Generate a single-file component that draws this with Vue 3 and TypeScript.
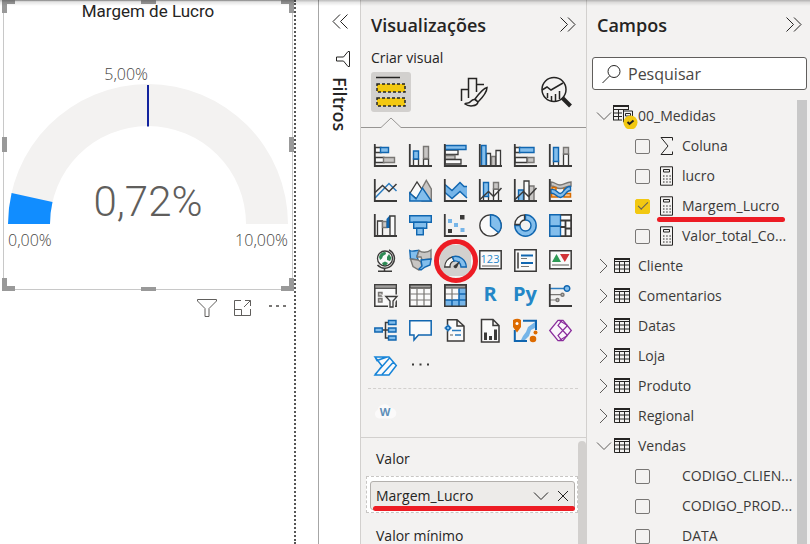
<script setup lang="ts">
import { ref } from 'vue'

interface Part { c: string; d: string }
interface Visual { name: string; parts: Part[]; text?: string; kind?: string }
interface Field { name: string; icon: 'sum' | 'calc' | 'none'; checked: boolean; marked?: boolean }
interface Table { name: string; open: boolean; measure?: boolean; fields: Field[] }

const box = (x: number, y: number, w: number, h: number): string => `M${x} ${y}h${w}v${h}h${-w}z`
const disc = (x: number, y: number, r: number): string =>
  `M${x - r} ${y}a${r} ${r} 0 1 0 ${2 * r} 0a${r} ${r} 0 1 0 ${-2 * r} 0z`
const p = (c: string, d: string): Part => ({ c, d })
const axis = p('axis', 'M.8 0V22H23')

const visuals: Visual[] = [
  { name: 'Barras empilhadas', parts: [p('white', box(1, 3.5, 6, 5)), p('blue', box(6.5, 3.5, 8, 5)), p('white', box(1, 13.5, 9, 5)), p('gray', box(9.5, 13.5, 11, 5)), axis] },
  { name: 'Colunas empilhadas', parts: [p('white', box(4.5, 15, 5, 7)), p('blue', box(4.5, 7, 5, 8)), p('white', box(14.5, 15, 5, 7)), p('gray', box(14.5, 2.5, 5, 12)), axis] },
  { name: 'Barras clusterizadas', parts: [p('white', box(1, 6, 13, 4.5)), p('gray', box(1, 11.5, 10, 4)), p('white', box(1, 15.5, 16, 4.5)), p('blue', box(1, 1.5, 21, 4)), axis] },
  { name: 'Colunas clusterizadas', parts: [p('white', box(7.5, 9.5, 4, 12.5)), p('gray', box(12.5, 12.5, 4, 9.5)), p('white', box(17, 6.5, 4.5, 15.5)), p('blue', box(2.5, 1.5, 4.5, 20.5)), axis] },
  { name: 'Barras 100% empilhadas', parts: [p('white', box(1, 3.5, 5, 5)), p('blue', box(5.5, 3.5, 14.5, 5)), p('white', box(1, 13.5, 12, 5)), p('gray', box(13.5, 13.5, 6.5, 5)), axis] },
  { name: 'Colunas 100% empilhadas', parts: [p('white', box(4.5, 17, 5, 5)), p('blue', box(4.5, 3.5, 5, 14)), p('white', box(14.5, 10, 5, 12)), p('gray', box(14.5, 3.5, 5, 6.5)), axis] },

  { name: 'Linhas', parts: [p('blueline', 'M1 19L15 4.5 22.5 12'), p('line', 'M1 13.5L8.5 6.5 15 12.5 22.5 5'), axis] },
  { name: 'Área', parts: [p('gray', 'M12 11L17.3 1.5 22.3 10V22H13z'), p('white', 'M.8 14.5L8 3 14 12 8 20z'), p('blue', 'M.8 22V14L7 20 13.5 9 22.3 22z')] },
  { name: 'Área empilhada', parts: [p('dot', 'M1 5.5L8 11.5 16 3.5 20 7.5H23V19L16 12.5 8 19.5 1 13.5z'), p('deepline', 'M1 5.5L8 11.5 16 3.5 20 7.5H23M1 13.5L8 19.5 16 12.5 23 19'), axis] },
  { name: 'Linhas e colunas empilhadas', parts: [p('white', box(4.5, 17, 5, 5)), p('blue', box(4.5, 3.5, 5, 14)), p('white', box(14.5, 10, 5, 12)), p('gray', box(14.5, 3.5, 5, 6.5)), p('line', 'M1 20.5L9.5 12.5 14.5 17.5 22.5 9'), axis] },
  { name: 'Linhas e colunas clusterizadas', parts: [p('blue', box(4.5, 11, 5, 11)), p('gray', box(15, 7, 5, 15)), p('white', box(10, 2, 5, 20)), p('line', 'M1 20.5L9.5 12.5 14.5 17.5 22.5 9'), axis] },
  { name: 'Faixas', parts: [p('gray', 'M2 3C6 3 7 6 11 6S17 3 22 3V7C18 7 15 9.500 11 9.500S6 7 2 7z'), p('orange', box(2.5, 14.500, 6, 3.500)), p('orange', box(15, 14.500, 6.500, 3.500)), p('orange', 'M3 8.500H7V11H3zM15 9.500H21V11.500H15z'), p('blue', 'M2 10.500C8 9.500 8 14.500 11.500 14.500S15 7 21.500 7.500V11.500C17 11 16 18.500 11.500 18.500S7 14 2 14z'), axis] },

  { name: 'Cascata', parts: [p('white', box(3.5, 7, 5, 15)), p('gray', box(8.5, 7.5, 4.5, 6)), p('bluefill', 'M12.500 5L16 1V14H12.500z'), p('white', box(16, 2, 5, 20)), axis] },
  { name: 'Funil', parts: [p('blue', box(.7, 1.7, 21.6, 6.5)), p('blue', box(4.7, 8.2, 13, 6)), p('blue', box(7.7, 14.2, 6.6, 6.5))] },
  { name: 'Dispersão', parts: [p('darkfill', box(16, 1, 4.5, 4.5)), p('dot', box(4, 5, 4, 4)), p('dot', box(10, 9, 4, 4)), p('darkfill', box(4, 15, 4, 4)), p('dot', box(16.5, 14, 4, 4)), axis] },
  { name: 'Pizza', parts: [p('white', disc(11.5, 11.5, 10.7)), p('blue', 'M11.500 .8A10.700 10.700 0 0 1 19.500 18.500L11.500 12z')] },
  { name: 'Rosca', parts: [p('blue', 'M11.500 .8A10.700 10.700 0 1 1 .8 11.500H6A5.500 5.500 0 1 0 11.500 6z'), p('white', 'M.8 10.500A10 10 0 0 1 10.500 .8V6A5.500 5.500 0 0 0 6 10.500z')] },
  { name: 'Treemap', parts: [p('white', box(.8, .8, 21.4, 21.4)), p('blue', box(.8, .8, 10.7, 11.5)), p('blue', box(.8, 12.3, 10.7, 9.9)), p('axis', 'M11.500 6.500H22M16.500 6.500V22M16.500 14.500H22M11.500 13H16.500'), p('outline', 'M11.500 .8H22.200V22.200H11.500')] },

  { name: 'Mapa', parts: [p('white', disc(11, 9.5, 7.5)), p('green', 'M5 8C6 4 9 2.500 11.500 3L12 5 9 7 8 9.500 6 11zM13 8L15 5 17.500 9 16 12 13 11zM8 14L11 12.500 14 14 12 16.500 9 16z'), p('line', 'M15 .8A9.700 9.700 0 1 1 3.500 16M10.500 19V22M4 22.300H18')] },
  { name: 'Mapa coroplético', parts: [p('blue', 'M.800 1.500C4 3.500 8 .500 10 1.500L8 7 9 11 1.500 10z'), p('gray', 'M10 1.500C13 4 18 4 22 1V10L13 11 12 8 8 8z'), p('gray', 'M1.500 10L9 11 12 13 13 18 10 21 4 17.500z'), p('blue', 'M12 11L22 10 21 16 16 18 12 21 10 20 13 17z')] },
  { name: 'Medidor', kind: 'selected', parts: [p('white', 'M.7 18A10.800 10.800 0 0 1 8.500 7.800L10 12A6 6 0 0 0 6 18z'), p('blue', 'M8.500 7.800A10.800 10.800 0 0 1 22.300 18H17A6 6 0 0 0 10 12z'), p('darkfill', 'M9.500 17L16 12 13 18.500A2 2 0 0 1 9.500 17z')] },
  { name: 'Cartão', text: '123', parts: [p('card', box(.8, 1.800, 21.400, 18)), p('thin', 'M3 17H20')] },
  { name: 'Cartão de várias linhas', parts: [p('card', box(.8, .8, 21.400, 21.400)), p('line', 'M4 3.500V19.500'), p('bluebar', 'M7 6.500H19M7 14H19'), p('thin', 'M7 9.500H13M7 17.500H15')] },
  { name: 'KPI', parts: [p('card', box(.8, 1.800, 21.400, 18)), p('greenfill', 'M3 13L7.500 5 12 13z'), p('redfill', 'M11 5H20.500L15.800 13z'), p('thin', 'M3 16H20')] },

  { name: 'Segmentação', parts: [p('card', box(.8, .8, 21.400, 21.400)), p('grayfill', box(.8, .8, 21.400, 3.500)), p('gray', box(4.500, 8.500, 3.500, 3.500)), p('gray', box(4.500, 14.500, 3.500, 3.500)), p('halo', 'M11.500 12.500H23.500L19 17V23H16V17z'), p('white', 'M11.800 12.500H23L19 17V23H16V17z')] },
  { name: 'Tabela', parts: [p('card', box(.8, .8, 21.400, 21.400)), p('grayfill', box(1, 1, 21, 3)), p('thin', 'M1 4.500H22M1 10H22M1 16H22M8 4.500V22M15 4.500V22')] },
  { name: 'Matriz', parts: [p('card', box(.8, .8, 21.400, 21.400)), p('dot', 'M15 4H22V22H1V16H15z'), p('deepline', 'M1 16H22M15 4.500V22M8 16V22M15 10H22'), p('grayfill', box(1, 1, 21, 3)), p('thin', 'M1 10H15M8 4.500V16'), p('outline', box(.8, .8, 21.400, 21.400))] },
  { name: 'Visual R', text: 'R', parts: [] },
  { name: 'Visual Python', text: 'Py', parts: [] },
  { name: 'Influenciadores', parts: [p('blueline', 'M1 4.500H16'), p('thin', 'M1 10.700H12M1 16H8'), p('blue', disc(18, 4.500, 2.800)), p('gray', disc(13.500, 10.700, 1.500)), p('gray', disc(8.500, 16, 1.500)), axis] },

  { name: 'Árvore hierárquica', parts: [p('line', 'M8 11H15M15 3.500H11.500V19H15'), p('blue', box(.8, 9, 7.500, 4)), p('blue', box(14.500, 1.500, 7.500, 4)), p('blue', box(14.500, 9, 7.500, 4)), p('blue', box(14.500, 17, 7.500, 4))] },
  { name: 'P e R', parts: [p('bubble', 'M.8 1.800H22.200V16H9.500L5 21V16H.8z')] },
  { name: 'Narrativa', parts: [p('sheet', 'M3.500 6V.8H13L20 7V22H3.500V12M13 .8V7H20'), p('blueline', 'M8 11.500H17M11 16H17'), p('thin', 'M6 16H9'), p('blueline', 'M4 5.500V12.500M.500 9H7.500'), p('blue', disc(4, 9, 2))] },
  { name: 'Relatório paginado', parts: [p('sheet', 'M2.500 .5H14L20 6.500V23H2.500zM14 .5V6.500H20'), p('darkfill', 'M5 13.500H8V21H5zM10 17H13V21H10zM15 10.500H18V21H15z')] },
  { name: 'ArcGIS', parts: [p('mapblue', 'M9 1.800H22V11M13 22H.8V11'), p('dot', 'M21 3V9L17 11 15 17 11 21H7L9 17 12 13 14 8z'), p('orangefill', 'M-1 1Q3.500-1.500 7 1V8L3 13.500-1 8z'), p('whitefill', disc(3, 4.500, 1.500)), p('orangefill', disc(19, 20, 3.300)), p('orangefill', disc(21.500, 13.500, 2))] },
  { name: 'Power Apps', parts: [p('purple', 'M9 1.300H14L22.300 11.500 14 21.700H9L.700 11.500z'), p('purpleline', 'M13 1.300L9 6.500 18.500 16.500M13 21.700L9 16.500 18.500 6.500M10 1.300L18.500 6.500M10 21.700L18.500 16.500')] },
  { name: 'Power Automate', parts: [p('auto', 'M1 3H15L22.300 11.500 15 21H1L8 12zM1 3L3 6.500 13 3M16 3.500L1 20.500M19.500 8L8 20.500')] },
  { name: 'Mais visuais', kind: 'more', parts: [p('darkfill', 'M3 9.500h2v2h-2zM10.500 9.500h2v2h-2zM18 9.500h2v2h-2z')] },
]

const tables = ref<Table[]>([
  {
    name: '00_Medidas', open: true, measure: true,
    fields: [
      { name: 'Coluna', icon: 'sum', checked: false },
      { name: 'lucro', icon: 'calc', checked: false },
      { name: 'Margem_Lucro', icon: 'calc', checked: true, marked: true },
      { name: 'Valor_total_Co...', icon: 'calc', checked: false },
    ],
  },
  { name: 'Cliente', open: false, fields: [] },
  { name: 'Comentarios', open: false, fields: [] },
  { name: 'Datas', open: false, fields: [] },
  { name: 'Loja', open: false, fields: [] },
  { name: 'Produto', open: false, fields: [] },
  { name: 'Regional', open: false, fields: [] },
  {
    name: 'Vendas', open: true,
    fields: [
      { name: 'CODIGO_CLIEN...', icon: 'none', checked: false },
      { name: 'CODIGO_PROD...', icon: 'none', checked: false },
      { name: 'DATA', icon: 'none', checked: false },
    ],
  },
])

const handles = ['nw', 'n', 'ne', 'w', 'e', 'sw', 's', 'se']
const search = ref('')
</script>

<template>
  <div class="app">
    <main class="canvas">
      <div class="report">
        <section class="visual">
          <h2>Margem de Lucro</h2>
          <svg class="gauge" viewBox="0 0 288 265" role="img" aria-label="Margem de Lucro">
            <path d="M4 200A140 140 0 0 1 284 200H242A98 98 0 0 0 46 200z" fill="#f3f2f1" />
            <path d="M4 200A140 140 0 0 1 7.600 169L48.500 178A98 98 0 0 0 46 200z" fill="#118dff" />
            <path class="target" d="M144 61V102.500" />
            <text x="144" y="56" text-anchor="end" class="tick">5,00%</text>
            <text x="4" y="222" class="tick">0,00%</text>
            <text x="284" y="222" text-anchor="end" class="tick">10,00%</text>
            <text x="144" y="192" text-anchor="middle" class="value">0,72%</text>
          </svg>
          <span v-for="h in handles" :key="h" class="handle" :class="h"></span>
        </section>
        <div class="actions">
          <button aria-label="Filtros do visual">
            <svg width="22" height="20" viewBox="0 0 22 20"><path d="M1.500 1.500H20.500V3L13 10.500V18.500H9V10.500L1.500 3z" /></svg>
          </button>
          <button aria-label="Modo de foco">
            <svg width="22" height="20" viewBox="0 0 22 20"><path d="M9 2.500H2.500V17.500H18.500V11M2.500 11.500H9.500V17.500M12 9L18.500 2.500M13 2.500H18.500V8" /></svg>
          </button>
          <button aria-label="Mais opções">
            <svg width="22" height="20" viewBox="0 0 22 20"><path class="dots" d="M1 7h3v2h-3zM8 7h3v2h-3zM15 7h3v2h-3z" /></svg>
          </button>
        </div>
      </div>
    </main>

    <aside class="filters">
      <button aria-label="Expandir filtros">
        <svg width="18" height="18" viewBox="0 0 18 18"><path d="M9 1.500L2 8.500 9 15.500M16.500 1.500L9.500 8.500 16.500 15.500" /></svg>
      </button>
      <svg class="funnel" width="18" height="18" viewBox="0 0 18 18"><path d="M15.500 1.500V16.500H14L9.500 11H2.500V7H9.500L14 1.500z" /></svg>
      <h2>Filtros</h2>
    </aside>

    <section class="builder">
      <header>
        <h1>Visualizações</h1>
        <button aria-label="Recolher visualizações">
          <svg width="18" height="18" viewBox="0 0 18 18"><path d="M1.500 1.500L8.500 8.500 1.500 15.500M9 1.500L16 8.500 9 15.500" /></svg>
        </button>
      </header>
      <p class="subtitle">Criar visual</p>
      <nav class="tabs">
        <button class="active" aria-label="Criar visual">
          <svg width="40" height="40" viewBox="0 0 40 40">
            <path d="M5 5.500H29" class="ink" />
            <path d="M6 12H34V20H6zM6 26H34V34H6z" fill="#f2c811" stroke="#252423" stroke-width="1.500" stroke-dasharray="3 2" />
          </svg>
        </button>
        <button aria-label="Formatar visual">
          <svg width="40" height="40" viewBox="0 0 40 40">
            <path class="ink" d="M7.500 29V17.500H14.500V25M14.500 19V6.500H22.500V20M22.500 12.500H30M14.500 17V26" />
            <path class="ink" d="M33 15.500C30 16 24 23 21 27L24 30C28 26 33 20 33 15.500zM20.500 27.500C17 27 17 31 14 31 11 31 11 32 11 32 15 35 23 34.500 24 30z" />
          </svg>
        </button>
        <button aria-label="Análise">
          <svg width="40" height="40" viewBox="0 0 40 40">
            <circle class="ink" cx="18" cy="17.500" r="12" />
            <path class="ink" d="M6 18L11 15 15 18 27 11M11.500 21V26M15.500 24V29M19.500 22V29M23.500 19V27" />
            <path d="M26.500 26L34.500 34" stroke="#252423" stroke-width="4" />
          </svg>
        </button>
      </nav>
      <svg class="caret" height="12" viewBox="0 0 226 12" preserveAspectRatio="xMinYMin slice"><path d="M0 10.500H20L30 1 40 10.500H1000" /></svg>

      <div class="gallery">
        <button v-for="v in visuals" :key="v.name" :aria-label="v.name" :class="v.kind">
          <svg width="23" height="23" viewBox="0 0 23 23">
            <path v-for="(part, i) in v.parts" :key="i" :class="part.c" :d="part.d" />
            <text v-if="v.text" x="11" :class="v.text === '123' ? 'digits' : 'code'" :y="v.text === '123' ? 14 : 17">{{ v.text }}</text>
          </svg>
          <span v-if="v.kind === 'selected'" class="ring"></span>
        </button>
      </div>
      <div class="custom">
        <button aria-label="Nuvem de palavras">
          <svg width="24" height="18" viewBox="0 0 24 18">
            <path class="cloud" d="M6 16.500A4.500 4.500 0 0 1 4.500 8 7 7 0 0 1 17.500 6 5 5 0 0 1 18.500 16.500z" />
            <text x="12" y="14" class="word">W</text>
          </svg>
        </button>
      </div>

      <div class="wells">
        <div class="well-list">
          <h3>Valor</h3>
          <div class="drop">
            <div class="pill">
              <span>Margem_Lucro</span>
              <button aria-label="Opções do campo"><svg width="16" height="12" viewBox="0 0 16 12"><path d="M1 2.500L8 9.500 15 2.500" /></svg></button>
              <button aria-label="Remover campo"><svg width="12" height="12" viewBox="0 0 12 12"><path d="M1 1L11 11M11 1L1 11" /></svg></button>
            </div>
          </div>
          <h3>Valor mínimo</h3>
        </div>
        <div class="bar"></div>
      </div>
    </section>

    <section class="fields">
      <header>
        <h1>Campos</h1>
        <button aria-label="Recolher campos">
          <svg width="18" height="18" viewBox="0 0 18 18"><path d="M1.500 1.500L8.500 8.500 1.500 15.500M9 1.500L16 8.500 9 15.500" /></svg>
        </button>
      </header>
      <label class="search">
        <svg width="20" height="20" viewBox="0 0 20 20"><circle cx="12" cy="7.500" r="6" /><path d="M7.500 12L.500 19" /></svg>
        <input v-model="search" type="text" placeholder="Pesquisar" aria-label="Pesquisar" />
      </label>
      <div class="tree-area">
        <ul class="tree">
          <li v-for="t in tables" :key="t.name">
            <button class="row table-row" :aria-expanded="t.open" @click="t.open = !t.open">
              <svg class="twisty" width="16" height="16" viewBox="0 0 16 16"><path :d="t.open ? 'M1 4.500L8 11.500 15 4.500' : 'M4 1L11 8 4 15'" /></svg>
              <svg v-if="t.measure" class="grid-icon" width="26" height="26" viewBox="0 0 26 26">
                <path d="M0 3H15.500" stroke-width="2" />
                <path d="M0 6.500H16M0 10H9M0 13.500H9M0 17H9M.500 2V17M5.500 6V17M10.500 6V8M15.500 2V7" />
                <path d="M10.500 8H19.500V19H10.500zM12.500 10.500H17.500V13H12.500z" />
                <circle cx="17.500" cy="19.500" r="7" fill="#f2c811" stroke="none" />
                <path d="M14.500 19L16.500 21 20.500 17.500" stroke-width="2" />
              </svg>
              <svg v-else class="grid-icon" width="26" height="26" viewBox="0 0 26 26">
                <path d="M1.500 5.500H16.500V19.500H1.500zM1 8.500H17M1 12H17M1 16H17M6.500 8V19M11.500 8V19" /><path d="M1 6H17" stroke-width="2" />
              </svg>
              <span>{{ t.name }}</span>
            </button>
            <template v-if="t.open">
              <label v-for="f in t.fields" :key="f.name" class="row field-row">
                <input v-model="f.checked" type="checkbox" />
                <svg class="kind" width="16" height="20" viewBox="0 0 16 20">
                  <path v-if="f.icon === 'sum'" d="M13.500 4.500V1.500H2L9 10 2 18.500H13.500V15.500" />
                  <template v-else-if="f.icon === 'calc'">
                    <path d="M1.500 .8H13.500V19.200H1.500zM4.500 3.500H10.500V6H4.500z" />
                    <path d="M4 10H12M4 13H12M4 16H12" stroke-dasharray="1.500 1.700" />
                  </template>
                </svg>
                <span>{{ f.name }}</span>
                <i v-if="f.marked" class="underline"></i>
              </label>
            </template>
          </li>
        </ul>
        <div class="bar"></div>
      </div>
    </section>
    <div class="shade"></div>
  </div>
</template>

<style>
body { margin: 0; background: #fff; }
</style>

<style scoped>
.app {
  position: relative;
  display: flex;
  height: 100vh;
  overflow: hidden;
  color: #252423;
  font-family: "Open Sans", "Noto Sans", sans-serif;
  font-size: 14px;
  line-height: 20px;
}
* { box-sizing: border-box; }
button { border: 0; padding: 0; margin: 0; background: none; color: inherit; font: inherit; display: flex; align-items: center; justify-content: center; }
h1, h2, h3, p, ul { margin: 0; padding: 0; font-size: 14px; font-weight: 400; }
svg { display: block; fill: none; stroke: #252423; flex: none; }
svg text { stroke: none; }
.shade { position: absolute; top: 0; left: 0; right: 0; height: 6px; background: linear-gradient(#00000045, #00000018 40%, #0000); pointer-events: none; }

.canvas { flex: 1; padding-right: 22px; min-width: 0; border-right: 1px solid #a6a6a6; background: #fff; }
.report { height: 100%; border-right: 2px dotted #555; }
.visual { position: relative; margin: 0 1px 0 3px; border: 1px solid #c8c8c8; }
.visual h2 { height: 23px; font: 17px/21px Roboto, sans-serif; text-align: center; }
.gauge { width: 100%; stroke: none; }
.target { stroke: #12239e; stroke-width: 2; }
.tick { font-size: 16px; font-weight: 300; fill: #484644; }
.value { font: 300 42px Roboto, sans-serif; fill: #605e5c; }
.handle { position: absolute; border: 0 solid #999; width: 13px; height: 13px; }
.nw { left: -2px; top: -1px; border-width: 4px 0 0 5px; }
.ne { right: -2px; top: -1px; border-width: 4px 5px 0 0; }
.sw { left: -2px; bottom: -2px; border-width: 0 0 5px 5px; }
.se { right: -2px; bottom: -2px; border-width: 0 5px 5px 0; }
.n, .s { left: calc(50% - 7px); width: 15px; height: 4px; background: #999; }
.n { top: -1px; }
.s { bottom: -2px; }
.w, .e { top: calc(50% - 8px); width: 5px; height: 15px; background: #999; }
.w { left: -2px; }
.e { right: -2px; }
.actions { display: flex; justify-content: flex-end; gap: 14px; padding: 8px 4px; }
.actions svg { stroke: #605e5c; }
.actions .dots { fill: #797775; stroke: none; }

.filters { flex: none; width: 41px; display: flex; flex-direction: column; align-items: center; padding-top: 13px; background: #fff; }
.filters .funnel { margin: 19px 0 0 6px; }
.filters h2 { margin-top: 9px; writing-mode: vertical-rl; font-size: 18px; font-weight: 600; line-height: 24px; }

.builder { flex: none; width: 226px; display: flex; flex-direction: column; border-left: 1px solid #d2d0ce; background: #f3f2f1; }
header { display: flex; justify-content: space-between; align-items: center; padding: 11px 7px 7px 10px; }
.builder header { padding-right: 9px; }
h1 { font-size: 18px; font-weight: 600; line-height: 28px; }
.subtitle { padding: 2px 10px 4px; }
.tabs { display: flex; justify-content: space-between; padding: 0 10px; }
.tabs .active { background: #d2d0ce; border-radius: 3px; }
.ink { stroke: #252423; stroke-width: 1.500; }
.caret { width: 100%; margin-top: 5px; }
.caret path { stroke: #979593; }
.gallery { display: grid; grid-template-columns: repeat(6, 35px); padding: 9px 7px 5px; }
.gallery button { position: relative; height: 35px; }
.gallery svg { overflow: visible; }
.gallery .selected svg { outline: 4px solid #d2d0ce; background: #d2d0ce; }
.ring { position: absolute; width: 44px; height: 44px; left: -4px; top: -4px; border: 5px solid #ed1c24; border-radius: 50%; }
.axis { stroke: #3b3a39; stroke-width: 1.800; }
.white { fill: #fafafa; stroke: #3b3a39; stroke-width: 1.300; }
.blue { fill: #83beec; stroke: #1066b0; stroke-width: 1.400; }
.gray { fill: #c8c6c4; stroke: #797774; stroke-width: 1.400; }
.line { stroke: #3b3a39; stroke-width: 1.500; }
.blueline { stroke: #2b7cc0; stroke-width: 1.500; }
.deepline { stroke: #1066b0; stroke-width: 1.500; }
.bluebar { stroke: #1066b0; stroke-width: 2; }
.bluefill { fill: #1066b0; stroke: none; }
.orange { fill: #f7c08a; stroke: #d86c00; stroke-width: 1.500; }
.orangefill { fill: #dd6b00; stroke: none; }
.darkfill { fill: #3b3a39; stroke: none; }
.whitefill { fill: #fff; stroke: none; }
.grayfill { fill: #a19f9d; stroke: #3b3a39; }
.dot { fill: #76b5e8; stroke: none; }
.outline { stroke: #3b3a39; stroke-width: 1.500; }
.card { fill: #fafafa; stroke: #3b3a39; stroke-width: 1.500; }
.sheet { fill: #fafafa; stroke: #3b3a39; stroke-width: 1.500; }
.thin { stroke: #797774; stroke-width: 1.200; }
.green { fill: #2e8a55; stroke: none; }
.greenfill { fill: #2e9a55; stroke: none; }
.redfill { fill: #d13438; stroke: none; }
.halo { fill: #f3f2f1; stroke: #f3f2f1; stroke-width: 4; }
.bubble { fill: #fafafa; stroke: #1066b0; stroke-width: 1.500; }
.mapblue { stroke: #1066b0; stroke-width: 2; }
.purple { stroke: #8a2d9c; fill: #faf5fb; stroke-width: 1.300; }
.purpleline { stroke: #8a2d9c; stroke-width: 1.200; }
.auto { stroke: #1684d8; fill: #fafafa; stroke-width: 1.500; }
.digits { fill: #2b88c9; font-size: 11px; text-anchor: middle; }
.code { fill: #2487c7; font-size: 20px; font-weight: 700; text-anchor: middle; }
.custom { flex: none; height: 49px; margin: 0 8px 0 7px; padding-top: 13px; border-top: 1px dashed #d2d0ce; }
.custom button { width: 34px; }
.cloud { fill: #fbfafa; stroke: none; }
.word { fill: #5f8fb8; font-size: 11px; font-weight: 700; text-anchor: middle; }

.wells { flex: 1; min-height: 0; display: flex; border-top: 1px solid #d2d0ce; }
.well-list { flex: 1; padding-left: 5px; overflow: hidden; }
.well-list h3 { padding: 13px 10px 9px; line-height: 16px; }
.drop { margin-bottom: 2px; padding: 4px 2px 2px 3px; border: 1px dashed #c8c6c4; background: #fff; }
.pill { position: relative; display: flex; align-items: center; gap: 8px; height: 29px; padding: 0 5px; border: 1px solid #b3b0ad; border-radius: 3px; background: #edebe9; }
.pill span { flex: 1; }
.pill::after { content: ""; position: absolute; left: 2px; right: -1px; bottom: -2px; height: 5px; border-radius: 3px; background: #ed1c24; }
.wells .bar { width: 8px; margin-top: 3px; border-radius: 4px 4px 0 0; background: #d2d0ce; }

.fields { flex: none; width: 224px; display: flex; flex-direction: column; border-left: 1px solid #d2d0ce; background: #f3f2f1; }
.search { display: flex; align-items: center; gap: 6px; height: 33px; margin: 11px 3px 0 5px; padding: 0 9px; border: 1px solid #605e5c; border-radius: 3px; background: #fff; }
.search input { flex: 1; min-width: 0; padding: 0; border: 0; outline: 0; background: none; font: 16px/24px "Open Sans", sans-serif; color: #484644; }
.search input::placeholder { color: #484644; opacity: 1; }
.tree-area { flex: 1; min-height: 0; display: flex; padding: 10px 3px 0 9px; }
.tree-area .bar { width: 10px; background: #c8c8c8; }
.tree { flex: 1; min-width: 0; padding-top: 1px; list-style: none; overflow: hidden; white-space: nowrap; line-height: 16px; }
.row { position: relative; display: flex; align-items: center; justify-content: flex-start; width: 100%; height: 30px; color: #3b3a39; }
.twisty { stroke: #605e5c; }
.grid-icon { margin: 0 -1px 0 1px; }
.field-row { padding-left: 39px; }
.field-row input { appearance: none; flex: none; width: 15px; height: 15px; margin: 0 9px 0 0; border: 1px solid #797775; border-radius: 2px; }
.field-row input:checked { border-color: #f2c811; background: #f2c811; }
.field-row input:checked::after { content: ""; display: block; width: 9px; height: 4px; margin: 2px; border: solid #605e5c; border-width: 0 0 1px 1px; transform: rotate(-45deg); }
.kind { margin-right: 7px; }
.underline { position: absolute; left: 61px; right: 12px; bottom: -1px; height: 5px; border-radius: 3px; background: #ed1c24; }
</style>
